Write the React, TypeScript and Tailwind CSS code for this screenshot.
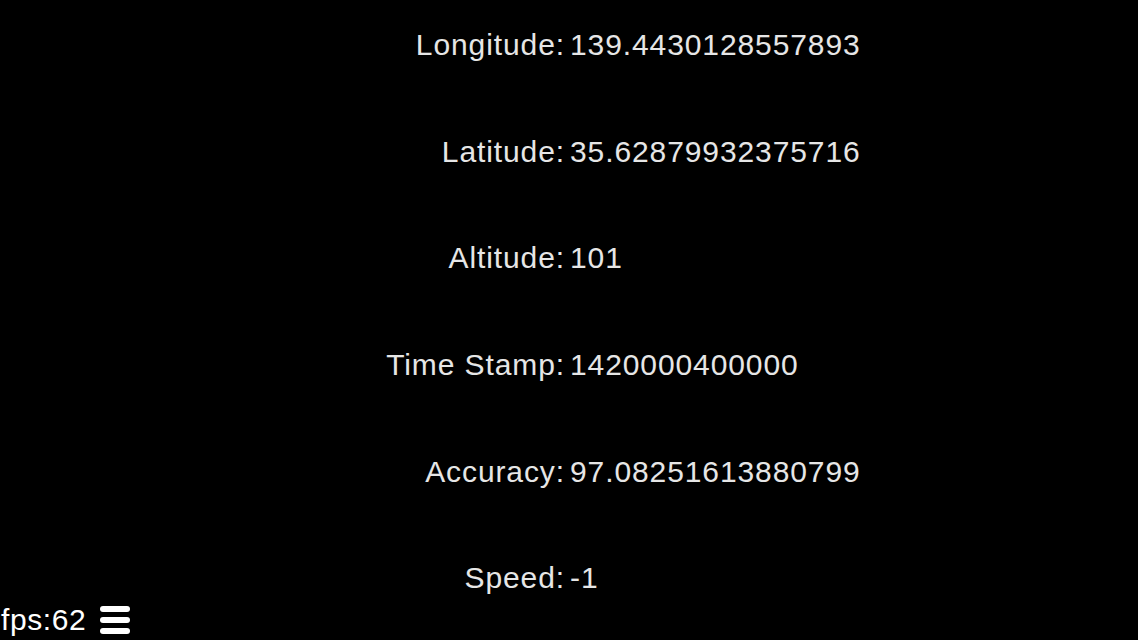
const rows = [
  { label: "Longitude:", value: "139.4430128557893" },
  { label: "Latitude:", value: "35.62879932375716" },
  { label: "Altitude:", value: "101" },
  { label: "Time Stamp:", value: "1420000400000" },
  { label: "Accuracy:", value: "97.08251613880799" },
  { label: "Speed:", value: "-1" },
];

export default function App() {
  return (
    <div
      className="relative h-[640px] w-[1138px] overflow-hidden bg-black"
      style={{ fontFamily: '"Liberation Sans", Arial, sans-serif' }}
    >
      <div className="flex flex-col gap-[66.67px] pt-[25px]">
        {rows.map((r) => (
          <div
            key={r.label}
            className="flex h-[40px] items-center text-[30px] leading-none tracking-[0.9px] text-[#e6e6e6]"
          >
            <div className="w-[565px] shrink-0 text-right">{r.label}</div>
            <div className="pl-[5px]">{r.value}</div>
          </div>
        ))}
      </div>

      <div className="absolute bottom-0 left-0 flex h-[40px] items-center gap-[14px] pl-[1px]">
        <span className="text-[30px] leading-none tracking-[0.6px] text-white">fps:62</span>
        <div className="flex w-[30px] flex-col gap-[5px]">
          <div className="h-[6px] rounded-full bg-white" />
          <div className="h-[6px] rounded-full bg-white" />
          <div className="h-[6px] rounded-full bg-white" />
        </div>
      </div>
    </div>
  );
}
